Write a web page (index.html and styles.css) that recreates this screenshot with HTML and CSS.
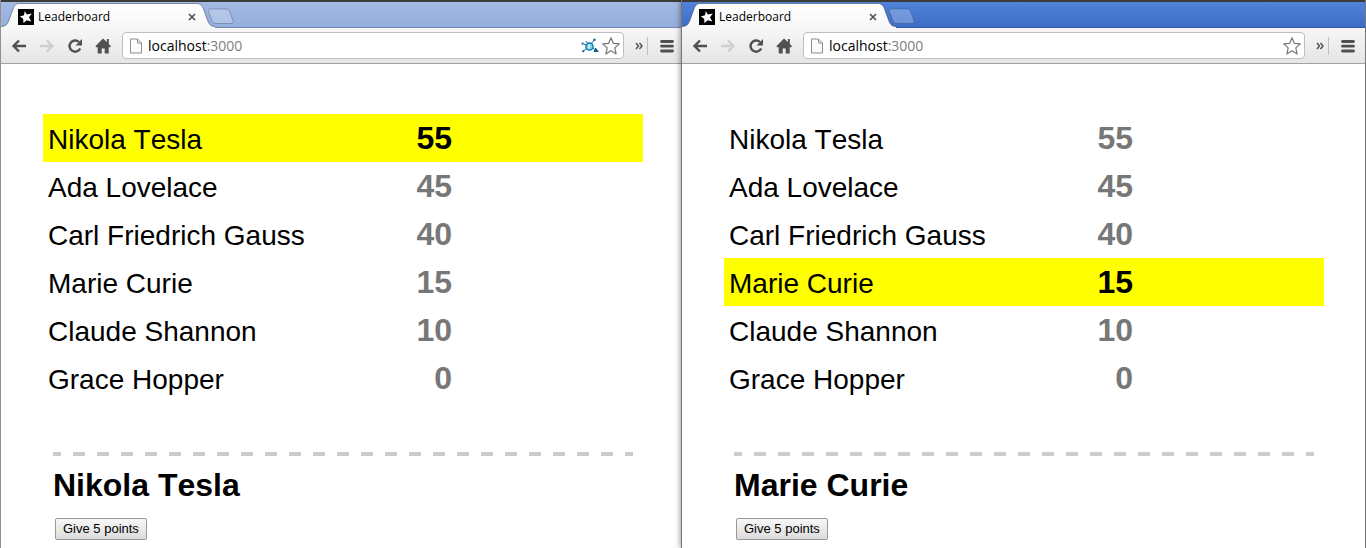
FILE: index.html
```html
<!DOCTYPE html>
<html lang="en">
<head>
<meta charset="utf-8">
<title>Leaderboard</title>
<link rel="stylesheet" href="styles.css">
</head>
<body>
<svg class="defs" aria-hidden="true">
  <linearGradient id="tab-fill" x1="0" y1="0" x2="0" y2="1"><stop offset="0" stop-color="#ffffff"/><stop offset="1" stop-color="#f7f7f7"/></linearGradient>
  <symbol id="tab" viewBox="0 0 214 26">
    <path d="M0 26V24.500C5 24.500 6.500 22 8 18L12 7C13.500 3 15 1.500 19 1.500H195C199 1.500 201 3 202.500 7L206.500 18C208 22 209.500 24.500 214 24.500V26Z" fill="url(#tab-fill)"/>
    <path d="M0 24.500C5 24.500 6.500 22 8 18L12 7C13.500 3 15 1.500 19 1.500H195C199 1.500 201 3 202.500 7L206.500 18C208 22 209.500 24.500 214 24.500" fill="none" stroke="#31425f" stroke-opacity=".55"/>
  </symbol>
  <symbol id="new-tab" viewBox="0 0 28 17">
    <path d="M3 1H19C21 1 22 2 22.800 4L26 12.500C26.700 14.500 26 15.500 24 15.500H9C6.500 15.500 5.500 14.500 4.800 12.500L1.500 3.500C1 2 1.500 1 3 1Z" fill="#fff" fill-opacity=".24" stroke="#2b4478" stroke-opacity=".35"/>
  </symbol>
  <symbol id="favicon" viewBox="0 0 16 16">
    <path d="M0 0H16V16H0Z" fill="#000"/>
    <path d="M6.800 2L8.800 5.600L13.800 4.600L11 8.200L13.200 12.400L8.800 11.200L5.400 14L5.200 9.800L1.800 7.400L6 6.200Z" fill="#fff"/>
  </symbol>
  <symbol id="back" viewBox="0 0 16 16"><path d="M15 8H3M8 2.500L2.500 8L8 13.500" fill="none" stroke="currentColor" stroke-width="2.400"/></symbol>
  <symbol id="forward" viewBox="0 0 16 16"><path d="M1 8H13M8 2.500L13.500 8L8 13.500" fill="none" stroke="currentColor" stroke-width="2.400"/></symbol>
  <symbol id="reload" viewBox="0 0 16 16"><path d="M12 4A5.600 5.600 0 1 0 13.200 10.500" fill="none" stroke="currentColor" stroke-width="2.400"/><path d="M15 1V7.500H8.500Z" fill="currentColor"/></symbol>
  <symbol id="home" viewBox="0 0 16 16"><path d="M8 .5L11.800 4V1H13.800V6L16 8.200L15.200 9.200H13.700V15.500H9.700V10.500H6.700V15.500H2.700V9.200H1.200L.4 8.200Z" fill="currentColor"/></symbol>
  <symbol id="page" viewBox="0 0 12 16"><path d="M.5 1H7.500L11.500 5V15H.5ZM7.500 1V5H11.500" fill="#fbfbfb" stroke="#8d8d8d"/></symbol>
  <symbol id="star" viewBox="0 0 18 18"><path d="M9 .8L11.300 6.300L17.300 6.900L12.800 10.900L14.100 16.900L9 13.700L3.900 16.900L5.200 10.900L.7 6.900L6.700 6.300Z" fill="#fff" stroke="#777" stroke-width="1.200" stroke-linejoin="round"/></symbol>
  <symbol id="network" viewBox="0 0 18 16">
    <path d="M8.500 8L5 3M8.500 8L13.500 1.500M8.500 8L1 5.500M8.500 8L2 13.500M8.500 8L16 13" stroke="#12688f" stroke-width="1"/>
    <circle cx="8.500" cy="8.500" r="3.600" fill="#7fd0ea" stroke="#1183ab" stroke-width="1.500"/>
    <path d="M8 6.500V10.500" stroke="#e4f6fc" stroke-width="1.500"/>
    <path d="M14.500 9.500L18 14L12.500 14Z" fill="#075d82"/>
    <g fill="#16678d"><circle cx="1.500" cy="5.500" r="1"/><circle cx="2.200" cy="13.200" r="1.100"/><circle cx="13.500" cy="1.800" r="1.200"/></g>
  </symbol>
  <symbol id="menu" viewBox="0 0 14 14"><path d="M1.500 2.500H12.500M1.500 7.200H12.500M1.500 12H12.500" stroke="currentColor" stroke-width="2.800" stroke-linecap="round"/></symbol>
  <symbol id="close" viewBox="0 0 8 8"><path d="M1 1L7 7M7 1L1 7" stroke="currentColor" stroke-width="1.600"/></symbol>
  <symbol id="more" viewBox="0 0 8 8"><path d="M1 1L3.500 4L1 7M4.500 1L7 4L4.500 7" fill="none" stroke="currentColor" stroke-width="1.400"/></symbol>
</svg>

<main class="desktop">
  <section class="window window-inactive" aria-label="Browser, Nikola Tesla selected">
    <div class="tab-strip">
      <div class="tab">
        <svg class="tab-shape"><use href="#tab"/></svg>
        <svg class="favicon"><use href="#favicon"/></svg>
        <span class="tab-title">Leaderboard</span>
        <button class="icon-button tab-close" aria-label="Close tab"><svg><use href="#close"/></svg></button>
      </div>
      <button class="icon-button new-tab" aria-label="New tab"><svg><use href="#new-tab"/></svg></button>
    </div>
    <div class="toolbar">
      <nav class="nav-buttons">
        <button class="icon-button" aria-label="Back"><svg><use href="#back"/></svg></button>
        <button class="icon-button" aria-label="Forward" disabled><svg><use href="#forward"/></svg></button>
        <button class="icon-button" aria-label="Reload"><svg><use href="#reload"/></svg></button>
        <button class="icon-button" aria-label="Home"><svg><use href="#home"/></svg></button>
      </nav>
      <div class="address-bar">
        <svg class="page-icon"><use href="#page"/></svg>
        <div class="address" role="textbox" contenteditable="true" spellcheck="false" aria-label="Address">localhost<span class="port">:3000</span></div>
        <button class="icon-button address-action" aria-label="Extension"><svg><use href="#network"/></svg></button>
        <button class="icon-button address-action" aria-label="Bookmark"><svg><use href="#star"/></svg></button>
      </div>
      <button class="icon-button more" aria-label="More extensions"><svg><use href="#more"/></svg></button>
      <span class="separator"></span>
      <button class="icon-button menu" aria-label="Menu"><svg><use href="#menu"/></svg></button>
    </div>
    <div class="page">
      <ul class="leaderboard">
        <li class="player selected"><span class="name">Nikola Tesla</span><span class="score">55</span></li>
        <li class="player"><span class="name">Ada Lovelace</span><span class="score">45</span></li>
        <li class="player"><span class="name">Carl Friedrich Gauss</span><span class="score">40</span></li>
        <li class="player"><span class="name">Marie Curie</span><span class="score">15</span></li>
        <li class="player"><span class="name">Claude Shannon</span><span class="score">10</span></li>
        <li class="player"><span class="name">Grace Hopper</span><span class="score">0</span></li>
      </ul>
      <div class="details">
        <h2 class="details-name">Nikola Tesla</h2>
        <button class="give">Give 5 points</button>
      </div>
    </div>
  </section>

  <section class="window window-active" aria-label="Browser, Marie Curie selected">
    <div class="tab-strip">
      <div class="tab">
        <svg class="tab-shape"><use href="#tab"/></svg>
        <svg class="favicon"><use href="#favicon"/></svg>
        <span class="tab-title">Leaderboard</span>
        <button class="icon-button tab-close" aria-label="Close tab"><svg><use href="#close"/></svg></button>
      </div>
      <button class="icon-button new-tab" aria-label="New tab"><svg><use href="#new-tab"/></svg></button>
    </div>
    <div class="toolbar">
      <nav class="nav-buttons">
        <button class="icon-button" aria-label="Back"><svg><use href="#back"/></svg></button>
        <button class="icon-button" aria-label="Forward" disabled><svg><use href="#forward"/></svg></button>
        <button class="icon-button" aria-label="Reload"><svg><use href="#reload"/></svg></button>
        <button class="icon-button" aria-label="Home"><svg><use href="#home"/></svg></button>
      </nav>
      <div class="address-bar">
        <svg class="page-icon"><use href="#page"/></svg>
        <div class="address" role="textbox" contenteditable="true" spellcheck="false" aria-label="Address">localhost<span class="port">:3000</span></div>
        <button class="icon-button address-action" aria-label="Bookmark"><svg><use href="#star"/></svg></button>
      </div>
      <button class="icon-button more" aria-label="More extensions"><svg><use href="#more"/></svg></button>
      <span class="separator"></span>
      <button class="icon-button menu" aria-label="Menu"><svg><use href="#menu"/></svg></button>
    </div>
    <div class="page">
      <ul class="leaderboard">
        <li class="player"><span class="name">Nikola Tesla</span><span class="score">55</span></li>
        <li class="player"><span class="name">Ada Lovelace</span><span class="score">45</span></li>
        <li class="player"><span class="name">Carl Friedrich Gauss</span><span class="score">40</span></li>
        <li class="player selected"><span class="name">Marie Curie</span><span class="score">15</span></li>
        <li class="player"><span class="name">Claude Shannon</span><span class="score">10</span></li>
        <li class="player"><span class="name">Grace Hopper</span><span class="score">0</span></li>
      </ul>
      <div class="details">
        <h2 class="details-name">Marie Curie</h2>
        <button class="give">Give 5 points</button>
      </div>
    </div>
  </section>
</main>
</body>
</html>
```

FILE: styles.css
```css
* { box-sizing: border-box; }

body {
  margin: 0;
  background: #fff;
  color: #000;
  font-family: "Liberation Sans", Arial, sans-serif;
  font-kerning: none;
}

.defs { position: absolute; width: 0; height: 0; }

.desktop {
  display: flex;
  min-height: 100vh;
  overflow: hidden;
}

.window {
  flex: 1;
  min-width: 0;
  border: 1px solid #978e8c;
  border-width: 0 1px;
  background: #fff;
}

/* The focused window sits over the edge of the other one. */
.window-active {
  position: relative;
  margin-left: -4px;
  border-color: #777;
  box-shadow: 0 0 6px rgba(0, 0, 0, .5);
}

.icon-button {
  display: flex;
  flex: none;
  width: 16px;
  height: 16px;
  padding: 0;
  border: 0;
  background: none;
  color: #505050;
}
.icon-button svg { width: 100%; height: 100%; }
.icon-button:disabled { color: #cfcfcf; }

.tab-strip {
  display: flex;
  height: 28px;
  border-top: 2px solid #3c3b37;
  background: linear-gradient(#a3bae2, #94aedb);
  box-shadow: inset 0 -1px #7189b3;
}
.window-active .tab-strip {
  background: linear-gradient(#5083d8, #3d6cc6);
  box-shadow: inset 0 -1px #2d55a3;
}

.tab {
  position: relative;
  display: flex;
  align-items: center;
  width: 214px;
  padding: 3px 19px 0 17px;
}
.tab-shape {
  position: absolute;
  inset: 0;
  width: 214px;
  height: 26px;
}
.favicon { position: relative; width: 16px; height: 16px; }
.tab-title {
  position: relative;
  flex: 1;
  margin-left: 4px;
  font: 12px/16px "Open Sans", "Noto Sans", sans-serif;
}
.tab-close { position: relative; width: 8px; height: 8px; }
.new-tab {
  width: 28px;
  height: 17px;
  margin: 6px 0 0 -8px;
}

.toolbar {
  display: flex;
  align-items: center;
  height: 36px;
  padding: 0 10px;
  border-bottom: 1px solid #a3a3a3;
  background: linear-gradient(#f7f7f7, #e5e5e5);
}
.nav-buttons { display: flex; gap: 12px; }

.address-bar {
  display: flex;
  flex: 1;
  align-items: center;
  min-width: 0;
  height: 27px;
  margin: 0 11px;
  padding: 0 3px 0 7px;
  border: 1px solid #bfbfbf;
  border-radius: 4px;
  background: #fff;
}
.page-icon { width: 12px; height: 16px; }
.address {
  flex: 1;
  margin-left: 6px;
  font: 14px/20px "Open Sans", "Noto Sans", sans-serif;
}
.port { color: #808080; }
.address-action { width: 18px; height: 18px; margin-left: 3px; }

.more { width: 8px; height: 8px; }
.separator {
  width: 1px;
  height: 18px;
  margin: 0 12px 0 4px;
  background: #c0c0c0;
}
.menu { width: 14px; height: 14px; }

.page { padding: 50px 40px 8px 42px; }

.leaderboard {
  max-width: 600px;
  margin: 0;
  padding: 0;
  list-style: none;
}
.player {
  display: flex;
  align-items: baseline;
  height: 48px;
  padding: 5px;
  line-height: 38px;
}
.player.selected { background: #ff0; }
.name { width: 300px; font-size: 28px; white-space: nowrap; }
.score {
  width: 104px;
  color: #777;
  font-size: 32px;
  font-weight: bold;
  text-align: right;
}
.selected .score { color: #000; }

.details {
  max-width: 580px;
  margin: 50px 10px 0;
  padding-top: 14px;
  background: repeating-linear-gradient(90deg, #ccc 0 8px, transparent 8px 20px, #ccc 20px 24px) 0 0 / 100% 4px no-repeat;
}
.details-name {
  margin: 0;
  font-size: 32px;
  line-height: 38px;
}
.give {
  height: 22px;
  margin: 14px 2px 0;
  padding: 0 7px;
  border: 1px solid #999;
  border-radius: 2px;
  background: linear-gradient(#f7f7f7, #dcdcdc);
  color: #000;
  font: 13px/20px "Liberation Sans", Arial, sans-serif;
}
```
